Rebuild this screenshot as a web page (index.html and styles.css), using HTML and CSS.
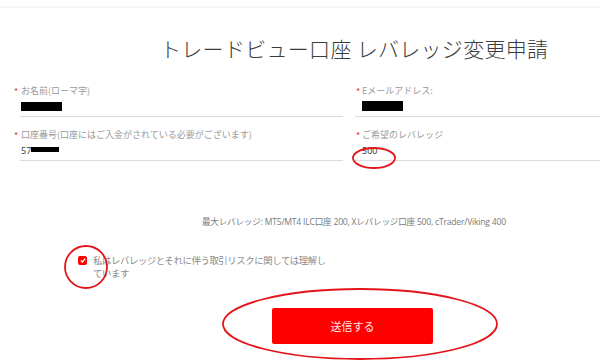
FILE: index.html
```html
<!DOCTYPE html>
<html lang="ja">
<head>
<meta charset="utf-8">
<link rel="stylesheet" href="styles.css">
</head>
<body>
<div class="page">
  <div class="topline"></div>
  <h1 class="title">トレードビュー口座 レバレッジ変更申請</h1>
  <div class="form-grid">
    <div class="field">
      <div class="label">お名前(ローマ字)</div>
      <div class="value"><span class="redact r-name"></span></div>
    </div>
    <div class="field right">
      <div class="label">Eメールアドレス:</div>
      <div class="value"><span class="redact r-mail"></span></div>
    </div>
    <div class="field">
      <div class="label">口座番号(口座にはご入金がされている必要がございます)</div>
      <div class="value">57<span class="redact r-acct"></span></div>
    </div>
    <div class="field right">
      <div class="label">ご希望のレバレッジ</div>
      <div class="value">500</div>
    </div>
  </div>
  <p class="note">最大レバレッジ: MT5/MT4 ILC口座 200, Xレバレッジ口座 500, cTrader/Viking 400</p>
  <div class="agree">
    <span class="checkbox">
      <svg width="6" height="5" viewBox="0 0 6 5"><path d="M0.8 2.6 L2.3 4 L5.2 0.8" fill="none" stroke="#fff" stroke-width="1.3"/></svg>
    </span>
    <span class="agree-text">私はレバレッジとそれに伴う取引リスクに関しては理解しています</span>
  </div>
  <div class="actions">
    <button class="submit">送信する</button>
  </div>
  <svg class="marks" width="600" height="362" viewBox="0 0 600 362">
    <ellipse cx="374" cy="152" rx="21" ry="10" fill="none" stroke="#e3151a" stroke-width="1.8"/>
    <ellipse cx="86" cy="261" rx="21" ry="21" fill="none" stroke="#e3151a" stroke-width="1.8"/>
    <ellipse cx="360" cy="318" rx="137" ry="35" fill="none" stroke="#e3151a" stroke-width="1.8"/>
  </svg>
</div>
</body>
</html>
```

FILE: styles.css
```css
html, body {
  margin: 0;
  padding: 0;
  background: #fff;
}
body {
  font-family: "Open Sans", "Noto Sans CJK JP", sans-serif;
  width: 600px;
  height: 362px;
  overflow: hidden;
}
.page {
  position: relative;
  width: 600px;
  height: 362px;
}
.topline {
  height: 2px;
  margin-top: 6px;
  background: #f6f6f6;
}
.title {
  margin: 27px 0 0 0;
  padding-left: 160px;
  font-family: "Noto Sans CJK JP", sans-serif;
  font-weight: 300;
  font-size: 21px;
  line-height: 26px;
  color: #3c3c3c;
  letter-spacing: 0.3px;
}
.form-grid {
  margin-top: 24px;
  padding-left: 20px;
  display: grid;
  grid-template-columns: 323px 245px;
  column-gap: 12px;
  row-gap: 12px;
}
.field {
  border-bottom: 1px solid #dcdcdc;
  padding-bottom: 2px;
}
.label {
  position: relative;
  padding-left: 1px;
  font-family: "Noto Sans CJK JP", sans-serif;
  font-size: 9px;
  line-height: 12px;
  color: #9a9a9a;
}
.label::before {
  content: "*";
  position: absolute;
  left: -6px;
  top: 1px;
  color: #e8332f;
  font-size: 9px;
}
.field.right .label,
.field.right .value {
  padding-left: 7px;
}
.field.right .label::before {
  left: 1px;
}
.value {
  margin-top: 3px;
  padding-left: 1px;
  font-size: 9px;
  line-height: 14px;
  height: 14px;
  color: #333;
}
.redact {
  display: inline-block;
  background: #000;
  vertical-align: top;
}
.r-name {
  width: 41px;
  height: 9px;
  margin-top: 2px;
}
.r-mail {
  width: 41px;
  height: 10px;
  margin-top: 1px;
}
.r-acct {
  width: 28px;
  height: 5px;
  margin-top: 3px;
}
.note {
  margin: 55px 0 0 0;
  padding-left: 202px;
  font-size: 8.6px;
  line-height: 12px;
  color: #7a7a7a;
  letter-spacing: -0.22px;
}
.agree {
  margin-top: 26px;
  padding-left: 78px;
  display: flex;
  align-items: flex-start;
  gap: 6px;
}
.checkbox {
  flex: none;
  width: 9px;
  height: 9px;
  margin-top: 2px;
  border-radius: 2px;
  background: #ff0000;
  display: flex;
  align-items: center;
  justify-content: center;
}
.agree-text {
  width: 236px;
  font-family: "Noto Sans CJK JP", sans-serif;
  font-size: 9.4px;
  line-height: 13px;
  color: #8a8a8a;
  letter-spacing: -0.4px;
}
.actions {
  margin-top: 28px;
  padding-left: 272px;
}
.submit {
  width: 161px;
  height: 36px;
  border: none;
  border-radius: 2px;
  background: #ff0000;
  color: #fde8e8;
  font-family: "Noto Sans CJK JP", sans-serif;
  font-size: 11px;
  padding: 0;
  display: block;
}
.marks {
  position: absolute;
  left: 0;
  top: 0;
  pointer-events: none;
}
```
